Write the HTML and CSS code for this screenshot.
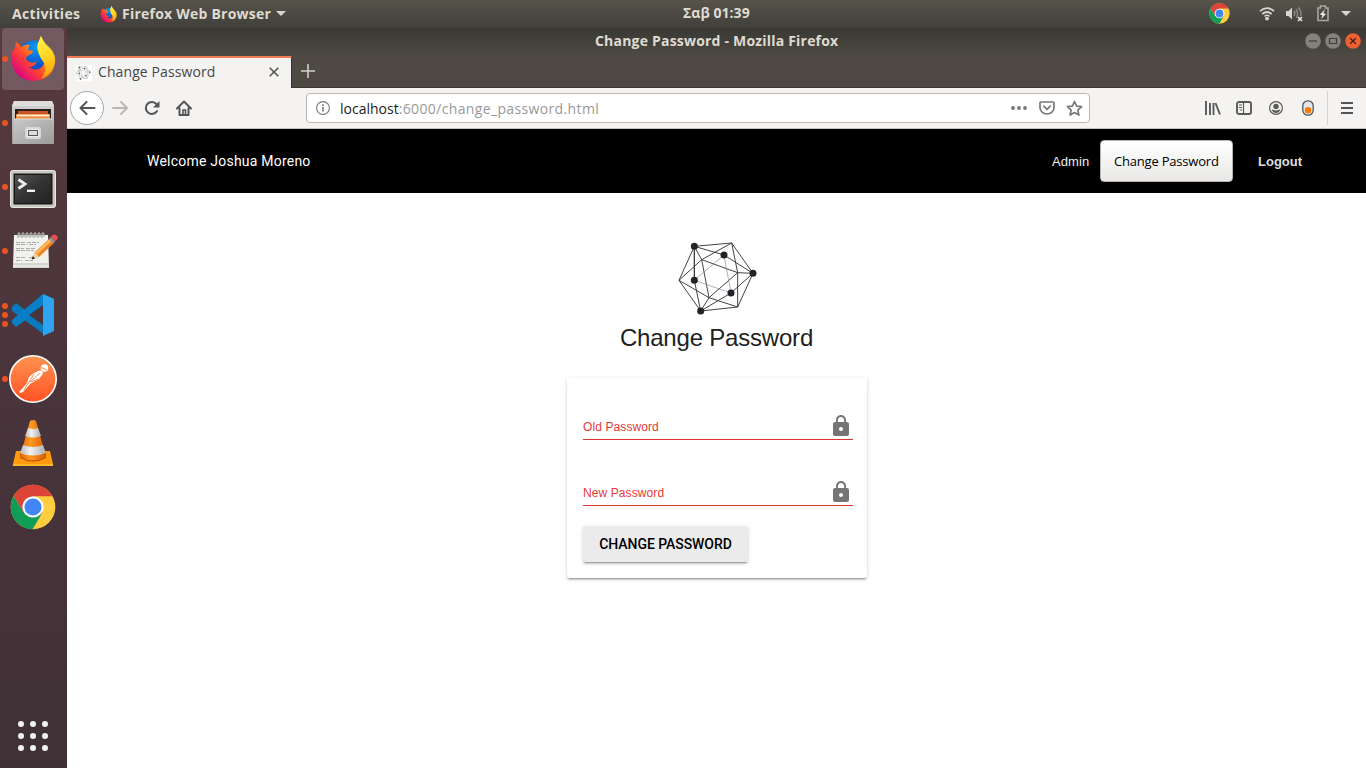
FILE: index.html
```html
<!DOCTYPE html>
<html lang="en">
<head>
<meta charset="utf-8">
<title>Change Password</title>
<link rel="stylesheet" href="styles.css">
</head>
<body>
<svg class="defs" width="0" height="0" aria-hidden="true">
  <defs>
    <linearGradient id="fox" x1=".9" y1=".1" x2=".15" y2=".85"><stop offset="0" stop-color="#ffe940"/><stop offset=".35" stop-color="#ffa115"/><stop offset=".65" stop-color="#ff4330"/><stop offset="1" stop-color="#dc087e"/></linearGradient>
    <linearGradient id="tail" x1=".4" y1="0" x2=".6" y2="1"><stop offset="0" stop-color="#fff04a"/><stop offset=".5" stop-color="#ffd51c"/><stop offset="1" stop-color="#ff9a12"/></linearGradient>
    <radialGradient id="globe" cx=".55" cy=".2" r=".9"><stop offset="0" stop-color="#0b9bf3"/><stop offset=".6" stop-color="#0a50ca"/><stop offset="1" stop-color="#252a8c"/></radialGradient>
    <linearGradient id="metal" x1="0" y1="0" x2="0" y2="1"><stop offset="0" stop-color="#d8d8d8"/><stop offset="1" stop-color="#989898"/></linearGradient>
    <linearGradient id="drawer" x1="0" y1="0" x2="1" y2="1"><stop offset="0" stop-color="#c9c9c9"/><stop offset="1" stop-color="#9c9c9c"/></linearGradient>
    <linearGradient id="screen" x1="0" y1="0" x2="1" y2="1"><stop offset="0" stop-color="#555"/><stop offset=".5" stop-color="#333"/><stop offset="1" stop-color="#222"/></linearGradient>
    <linearGradient id="post" x1="0" y1="0" x2="0" y2="1"><stop offset="0" stop-color="#ff9350"/><stop offset="1" stop-color="#ff5225"/></linearGradient>
    <linearGradient id="cone" x1="0" y1="0" x2="1" y2="0"><stop offset="0" stop-color="#e26500"/><stop offset=".4" stop-color="#ff9a24"/><stop offset="1" stop-color="#d65a00"/></linearGradient>
    <linearGradient id="band" x1="0" y1="0" x2="1" y2="0"><stop offset="0" stop-color="#b9b9b9"/><stop offset=".4" stop-color="#f2f2f2"/><stop offset="1" stop-color="#aaa"/></linearGradient>
    <symbol id="firefox" viewBox="0 0 46 46">
      <circle cx="24" cy="22" r="17.500" fill="url(#globe)"/>
      <path d="M6 6C8 7 10 9 11 11Q15 8 20 9Q18 11 18 14L23 15Q23 18 17 20Q14 24 20 26Q24 28 27 25Q25 31 19 31Q26 36 32 31Q37 25 32 15Q28 7 31 0Q34 7 40 12Q46 18 45 27Q42 44 23 45Q6 44 2 28Q0 16 5 12Z" fill="url(#fox)"/>
      <path d="M31 0Q33 7 39 12Q47 20 43 32Q39 40 31 43Q38 34 34 27Q25 14 28 7Z" fill="url(#tail)"/>
    </symbol>
    <symbol id="chrome" viewBox="0 0 46 46">
      <circle cx="23" cy="23" r="22.300" fill="#ffcd40"/>
      <path d="M3.700 11.900A22.300 22.300 0 0 1 42.500 12.300H23L13.300 28.500Z" fill="#db4437"/>
      <path d="M3.700 11.900A22.300 22.300 0 0 0 22.600 45.300L32.500 28.500L23 33L13.200 28Z" fill="#0f9d58"/>
      <circle cx="23" cy="23" r="10.600" fill="#fff"/><circle cx="23" cy="23" r="8.500" fill="#4285f4"/>
    </symbol>
    <symbol id="poly" viewBox="230 32 244 224">
      <g fill="none" stroke="#33353a" stroke-width="2.800">
        <path d="M282 48L394 38L458 129L412 230L301 242L236 150ZM304 88L412 127L326 202ZM282 48L304 88L236 150L326 202L301 242M304 88L394 38L412 127L458 129M412 127V230L326 202M282 48L371 74L458 129L392 188L301 242L282 150ZM282 48V150"/>
        <path d="M371 74L282 150L392 188Z" stroke="#888" stroke-width="2"/>
      </g>
      <g fill="#222329"><circle cx="282" cy="48" r="10.500"/><circle cx="371" cy="74" r="10.500"/><circle cx="458" cy="129" r="10.500"/><circle cx="282" cy="150" r="10.500"/><circle cx="392" cy="188" r="10.500"/><circle cx="301" cy="242" r="10.500"/></g>
    </symbol>
    <symbol id="lock" viewBox="0 0 24 24"><path fill="#757575" d="M18 8h-1V6c0-2.760-2.240-5-5-5S7 3.240 7 6v2H6c-1.100 0-2 .9-2 2v10c0 1.100.9 2 2 2h12c1.100 0 2-.9 2-2V10c0-1.100-.9-2-2-2zm-6 9c-1.100 0-2-.9-2-2s.9-2 2-2 2 .9 2 2-.9 2-2 2zm3.100-9H8.900V6c0-1.710 1.390-3.100 3.100-3.100 1.710 0 3.100 1.390 3.100 3.100v2z"/></symbol>
  </defs>
</svg>

<header class="panel">
  <div class="panel-left">
    <span class="activities">Activities</span>
    <svg class="panel-fox" width="17" height="17"><use href="#firefox"/></svg>
    <span class="app-name">Firefox Web Browser</span>
    <svg width="10" height="6" viewBox="0 0 10 6"><path d="M0 0h10L5 5z" fill="#d8d5ce"/></svg>
  </div>
  <span class="clock">Σαβ 01:39</span>
  <div class="panel-right">
    <svg class="tray-chrome" width="21" height="21"><use href="#chrome"/></svg>
    <svg class="tray-wifi" width="16" height="15" viewBox="0 0 16 15" fill="none" stroke="#d8d5ce" stroke-width="1.700"><path d="M1 5.200Q8-1 15 5.200"/><path d="M3.300 8Q8 4 12.700 8" /><path d="M5.500 10.300Q8 8.300 10.500 10.300" stroke-width="1.500"/><circle cx="8" cy="12.600" r="1.900" fill="#d8d5ce" stroke="none"/></svg>
    <svg class="tray-sound" width="18" height="16" viewBox="0 0 18 16" fill="none" stroke="#8f8c85" stroke-width="1.400"><path d="M0 5h2.500L6 1.500v12L2.500 10H0z" fill="#d8d5ce" stroke="none"/><path d="M8 5Q9.800 7.500 8 10M10 3Q13 7.500 10.300 11.500M12.500 1.500Q16 6 14.500 10"/><path d="M12 11l4 4M16 11l-4 4" stroke="#e5e2dc" stroke-width="1.700"/></svg>
    <svg class="tray-battery" width="12" height="17" viewBox="0 0 12 17"><path d="M1 3h2.500V1h5v2H11v12.500H1z" fill="none" stroke="#aaa79f" stroke-width="1.600"/><path d="M8.200 4L3 9.500l2.500.8L4 14l5-5-2.700-.8z" fill="#eee"/></svg>
    <svg width="10" height="6" viewBox="0 0 10 6"><path d="M0 0h10L5 5z" fill="#d8d5ce"/></svg>
  </div>
</header>

<div class="desktop">
<nav class="dock">
  <div class="dock-item active"><i class="dots"><b></b></i><svg width="46" height="46"><use href="#firefox"/></svg></div>
  <div class="dock-item"><i class="dots"><b></b></i>
    <svg width="44" height="46" viewBox="0 0 44 46"><path d="M3 1h38l2 5v38H1V6z" fill="url(#metal)"/><path d="M1 6L3 1h38l2 5z" fill="#dedede"/><path d="M4 9h36v11H4z" fill="#29201c"/><path d="M7 11h30v7H7z" fill="#c9562a"/><path d="M5 14h34v5H5z" fill="#f09040"/><path d="M6 15.500h32" stroke="#fff3df" stroke-width="1.500"/><path d="M3 19h38l1 25H2z" fill="url(#drawer)"/><path d="M3 19h38" stroke="#ddd"/><rect x="15" y="28" width="14" height="10" rx="1.500" fill="#eee" stroke="#d8d8d8" stroke-width="2"/><rect x="17.500" y="30.500" width="9" height="5" fill="#ddd" stroke="#555"/></svg></div>
  <div class="dock-item"><i class="dots"><b></b></i>
    <svg class="terminal" width="46" height="38" viewBox="0 0 46 38"><rect x=".5" y=".5" width="45" height="37" rx="2" fill="#c8c8c5" stroke="#e8e8e5"/><rect x="3.500" y="3.500" width="39" height="31" fill="#191919"/><rect x="5" y="5" width="36" height="28" fill="url(#screen)"/><path d="M8.500 9.500l6.500 4.500-6.500 4.500" fill="none" stroke="#eee" stroke-width="2.800"/><path d="M17 20.800h8" stroke="#fff" stroke-width="2.200"/></svg></div>
  <div class="dock-item"><i class="dots"><b></b></i>
    <svg class="editor" width="46" height="38" viewBox="0 0 46 38"><path d="M2 3h34l1 31H1z" fill="#f1f1ed"/><path d="M1 31h36v5H1z" fill="#d4d5d0"/><path d="M1 34h36" stroke="#fafafa"/><path d="M4 10.500h9m2 0h12M4 12.500h11m2 0h7M4 16.500h8m2 0h10M4 18.500h18M4 25.500h10m3 0h3M4 28.500h6m3 0h8" stroke="#aaa" stroke-dasharray="4 1"/><g fill="none" stroke="#a8a8a6" stroke-width="1.300"><path d="M6 6V2q1-2 2 0v3M10 6V2q1-2 2 0v3M14 6V2q1-2 2 0v3M18 6V2q1-2 2 0v3M22 6V2q1-2 2 0v3M26 6V2q1-2 2 0v3M30 6V2q1-2 2 0v3"/></g><path d="M20 27l3-7L37 7l5 4-15 14z" fill="#ee8420"/><path d="M23.500 20L37.500 7l2 2L25.500 22.500z" fill="#ffb55a"/><path d="M20 27l3-7 4 5z" fill="#efd5a0"/><path d="M19.500 27.500l1.300-3.500 2.200 2.400z" fill="#222"/><path d="M37 7l2-2 4 4.500-2 2z" fill="#8f979b"/><path d="M39 5q2.500-4 5.500-1.500t-1.500 6z" fill="#ea4f4f"/></svg></div>
  <div class="dock-item"><i class="dots"><b></b><b></b><b></b></i>
    <svg width="42" height="42" viewBox="0 0 42 42"><path d="M0 13l4-4L33 31v10L0 17z" fill="#0879bd"/><path d="M0 29l4 4L42 5 31 0 0 26z" fill="#087fc7"/><path d="M31 0l11 5v32l-11 5z" fill="#2da4ee"/><path d="M31 11v20L17 21z" fill="#49343a"/></svg></div>
  <div class="dock-item"><i class="dots"><b></b></i>
    <svg width="48" height="48" viewBox="0 0 48 48"><circle cx="24" cy="24" r="23.200" fill="url(#post)" stroke="#fff" stroke-width="1.600"/><circle cx="35.500" cy="13" r="3.800" fill="#fff"/><path d="M31 15.500q3 .5 3 3L30 24l-9 5-6 7-3 2-2-1 2-2 6-7 2-6q5-5 11-6.500z" fill="#fff"/><path d="M32 12.500l6 2.500M31 18l-10 9M25 19l-5 8-5 8M29 24l-7 3" fill="none" stroke="#ff7d48" stroke-width=".9"/></svg></div>
  <div class="dock-item"><i class="dots"></i>
    <svg width="42" height="46" viewBox="0 0 42 46"><path d="M4 31h34l3 13q0 2-2 2H2q-2 0-1-2z" fill="#ff9a0d"/><path d="M1 44h40v2H1z" fill="#ffb52b"/><path d="M8 33q13 10 26 0v5q-13 7-26 0z" fill="#b94c00"/><path d="M18 1q3-2 6 0l10 36q-13 7-26 0z" fill="url(#cone)"/><path d="M16 8q5 2 10 0l3 8q-8 3-16 0z" fill="url(#band)"/><path d="M11 25q10 4 20 0l3 8q-13 5-26 0z" fill="url(#band)"/></svg></div>
  <div class="dock-item"><i class="dots"></i><svg width="46" height="46"><use href="#chrome"/></svg></div>
  <svg class="apps" width="30" height="30" viewBox="0 0 30 30" fill="#f2f2f2"><circle cx="3" cy="3" r="3"/><circle cx="15" cy="3" r="3"/><circle cx="27" cy="3" r="3"/><circle cx="3" cy="15" r="3"/><circle cx="15" cy="15" r="3"/><circle cx="27" cy="15" r="3"/><circle cx="3" cy="27" r="3"/><circle cx="15" cy="27" r="3"/><circle cx="27" cy="27" r="3"/></svg>
</nav>

<main class="window">
  <div class="titlebar">
    <span class="win-title">Change Password - Mozilla Firefox</span>
    <div class="win-buttons">
      <svg width="16" height="16" viewBox="0 0 16 16"><circle cx="8" cy="8" r="7.800" fill="#84817a"/><path d="M4 8h8" stroke="#3c3b37" stroke-width="1.200"/></svg>
      <svg width="16" height="16" viewBox="0 0 16 16"><circle cx="8" cy="8" r="7.800" fill="#84817a"/><path d="M4.500 5.500h7v5h-7z" fill="none" stroke="#3c3b37" stroke-width="1.200"/></svg>
      <svg width="16" height="16" viewBox="0 0 16 16"><circle cx="8" cy="8" r="7.800" fill="#ee5f31"/><path d="M5.200 5.200l5.600 5.600M10.800 5.200l-5.600 5.600" stroke="#402018" stroke-width="1.300"/></svg>
    </div>
  </div>
  <div class="tabs">
    <div class="tab">
      <span class="favicon"><svg width="15" height="14"><use href="#poly"/></svg></span>
      <span class="tab-title">Change Password</span>
      <svg class="tab-close" width="10" height="10" viewBox="0 0 10 10"><path d="M.7.700l8.600 8.600M9.300.7L.7 9.300" stroke="#555" stroke-width="1.600"/></svg>
    </div>
    <svg class="new-tab" width="14" height="14" viewBox="0 0 14 14"><path d="M7 0v14M0 7h14" stroke="#d0cfcb" stroke-width="1.600"/></svg>
  </div>
  <div class="toolbar">
    <span class="back"><svg width="17" height="14" viewBox="0 0 17 14" fill="none" stroke="#555" stroke-width="2"><path d="M15.500 7H1.500M7.500 1l-6 6 6 6" stroke-linecap="round" stroke-linejoin="round"/></svg></span>
    <svg class="forward" width="17" height="14" viewBox="0 0 17 14" fill="none" stroke="#b9b8b7" stroke-width="2"><path d="M1 7h14M9 1l6 6-6 6" stroke-linecap="round" stroke-linejoin="round"/></svg>
    <svg class="reload" width="16" height="16" viewBox="0 0 16 16"><path d="M13 11A6 6 0 1 1 12.500 4.200" fill="none" stroke="#555" stroke-width="2" stroke-linecap="round"/><path d="M15.500 1v6.500H9z" fill="#555"/></svg>
    <svg class="home" width="16" height="16" viewBox="0 0 16 16" fill="none" stroke="#555" stroke-width="2"><path d="M1 8.500L8 1.500l7 7M3.500 8v7h9V8" stroke-linecap="round" stroke-linejoin="round"/><path d="M7 14v-4h2.500v4" stroke-width="1.600"/></svg>
    <div class="url-bar">
      <svg width="14" height="14" viewBox="0 0 14 14"><circle cx="7" cy="7" r="6.400" fill="none" stroke="#777" stroke-width="1.100"/><path d="M7 6v4.500M7 3.300v1.600" stroke="#777" stroke-width="1.600"/></svg>
      <span class="url"><span class="host">localhost</span><span class="path">:6000/change_password.html</span></span>
      <svg class="more" width="16" height="4" viewBox="0 0 16 4" fill="#777"><circle cx="2" cy="2" r="1.900"/><circle cx="8" cy="2" r="1.900"/><circle cx="14" cy="2" r="1.900"/></svg>
      <svg class="pocket" width="16" height="14" viewBox="0 0 16 14" fill="none" stroke="#777" stroke-width="1.700" stroke-linecap="round" stroke-linejoin="round"><path d="M2 1h12q1 0 1 1v4.500A7 6.500 0 0 1 1 6.500V2q0-1 1-1z"/><path d="M4.700 5.200L8 8.300l3.300-3.100"/></svg>
      <svg width="17" height="17" viewBox="0 0 17 17"><path d="M8.500 1.500l2.100 4.600 5 .6-3.700 3.400 1 5-4.400-2.500-4.400 2.500 1-5-3.700-3.400 5-.6z" fill="none" stroke="#777" stroke-width="1.700" stroke-linejoin="round"/></svg>
    </div>
    <div class="tools">
      <svg class="library" width="16" height="16" viewBox="0 0 16 16" stroke="#5a5a59" stroke-width="1.900"><path d="M1 1v14M5 3v12M8.500 3v12M10.500 3L15 14.500"/></svg>
      <svg class="sidebar" width="16" height="14" viewBox="0 0 16 14" fill="none" stroke="#5a5a59"><rect x="1" y="1" width="14" height="12" rx="2" stroke-width="1.900"/><path d="M7.500 1v12M3 4h3M3 6.500h3M4 9h2" stroke-width="1.200"/></svg>
      <svg class="account" width="14" height="14" viewBox="0 0 14 14"><circle cx="7" cy="7" r="6.400" fill="none" stroke="#5a5a59" stroke-width="1.200"/><circle cx="7" cy="5.400" r="2.700" fill="#5a5a59"/><path d="M2.600 8.300Q7 10.500 11.400 8.300Q10.500 12 7 12T2.600 8.300z" fill="#5a5a59"/></svg>
      <svg class="toggle" width="12" height="16" viewBox="0 0 12 16"><rect x=".8" y=".8" width="10.400" height="14.400" rx="5" fill="#e2e7ef" stroke="#555" stroke-width="1.300"/><circle cx="6" cy="10.300" r="3.200" fill="#ff7b00"/></svg>
      <span class="divider"></span>
      <svg width="12" height="12" viewBox="0 0 12 12"><path d="M0 1h12M0 6h12M0 11h12" stroke="#555" stroke-width="1.900"/></svg>
    </div>
  </div>

  <section class="page">
    <div class="navbar">
      <span class="welcome">Welcome Joshua Moreno</span>
      <div class="nav-links"><a class="admin">Admin</a><button class="nav-button"><span>Change Password</span></button><a class="logout">Logout</a></div>
    </div>
    <div class="content">
      <svg class="logo" width="81.330" height="74.670"><use href="#poly"/></svg>
      <h1 class="heading">Change Password</h1>
      <form class="card">
        <label class="field"><span>Old Password</span><svg width="24" height="24"><use href="#lock"/></svg></label>
        <label class="field"><span>New Password</span><svg width="24" height="24"><use href="#lock"/></svg></label>
        <button type="button" class="submit">CHANGE PASSWORD</button>
      </form>
    </div>
  </section>
</main>
</div>
</body>
</html>
```
FILE: styles.css
```css
* { box-sizing: border-box; }
body { margin: 0; width: 1366px; height: 768px; overflow: hidden; background: #fff; font-family: "Open Sans", "Noto Sans", sans-serif; }
svg { display: block; flex: none; }
.defs { position: absolute; }
span, a, button { white-space: nowrap; }

.panel { height: 28px; display: grid; grid-template-columns: 683px 68px 1fr; align-items: center; background: linear-gradient(#58544c, #403f3a); color: #dfdbd2; font-size: 14px; font-weight: 700; line-height: 26px; }
.panel-left { display: flex; align-items: center; padding-left: 12px; }
.activities { width: 88px; letter-spacing: .33px; }
.panel-fox { margin-right: 5px; }
.app-name { width: 154px; letter-spacing: .23px; }
.clock { padding-bottom: 2px; letter-spacing: .05px; }
.panel-right { display: flex; align-items: center; justify-content: flex-end; padding-right: 15px; }
.tray-chrome { margin: 0 29px 2px 0; }
.tray-wifi { margin: 0 11px 1px 0; }
.tray-sound { margin-right: 13px; }
.tray-battery { margin: 0 12px 2px 0; }

.desktop { display: grid; grid-template-columns: 67px 1299px; height: 740px; }
.dock { display: flex; flex-direction: column; gap: 2px; background: linear-gradient(#57393e, #49343b 50%, #3f3135); }
.dock-item { display: flex; align-items: center; width: 62px; height: 62px; margin-left: 2px; border-radius: 4px; }
.dock-item > svg { margin: 0 auto; }
.dock-item .terminal { margin-top: 3px; }
.dock-item .editor { margin-left: 10px; }
.active { background: #725a60; }
.dots { display: flex; flex-direction: column; gap: 3px; width: 6px; flex: none; margin-right: -6px; }
.dots b { width: 6px; height: 6px; border-radius: 50%; background: #e95420; }
.apps { margin: auto 0 17px 18px; }

.window { display: flex; flex-direction: column; }
.titlebar { display: grid; grid-template-columns: 528px 1fr auto; height: 28px; align-items: center; background: linear-gradient(#393833, #4e4a43); color: #dfdbd2; }
.win-title { grid-column: 2; padding-bottom: 2px; font-size: 14px; font-weight: 700; line-height: 26px; letter-spacing: .2px; }
.win-buttons { display: flex; gap: 4px; padding: 0 5px 2px 0; }
.tabs { display: flex; align-items: center; height: 32px; background: #4e4a43; border-bottom: 1px solid #3b3933; }
.tab { display: flex; align-items: center; width: 225px; height: 32px; padding-left: 9px; margin-bottom: -1px; background: #f4f3f2; border-top: 2px solid #f37c54; border-right: 1px solid #34332f; }
.favicon { width: 16px; height: 16px; margin-bottom: 1px; padding-top: 1px; background: #fff; }
.tab-title { width: 171px; margin-left: 6px; padding-bottom: 2px; font-size: 14px; line-height: 28px; color: #484746; letter-spacing: .1px; }
.tab-close { margin-bottom: 2px; }
.new-tab { margin: 0 0 2px 9px; }
.toolbar { display: flex; align-items: center; height: 41px; padding-left: 3px; background: #f4f3f2; border-bottom: 1px solid #c7c3c0; }
.back { display: grid; place-items: center; width: 34px; height: 34px; border: 1px solid #aaa8a6; border-radius: 50%; background: #fff; }
.forward { margin-left: 8px; }
.reload { margin-left: 15px; }
.home { margin-left: 16px; }
.url-bar { display: flex; align-items: center; width: 784px; height: 30px; margin-left: 114px; padding-left: 9px; border: 1px solid #bbb7b4; border-radius: 4px; background: #fff; }
.url { width: 671px; margin-left: 10px; padding-top: 2px; font-size: 14px; line-height: 26px; color: #999; }
.host { color: #222; }
.path { letter-spacing: .36px; }
.more { margin-right: 12px; }
.pocket { margin-right: 11px; }
.tools { display: flex; align-items: center; margin-left: 115px; }
.library { margin-right: 15px; }
.sidebar { margin-right: 17px; }
.account { margin-right: 19px; }
.toggle { margin-right: 13px; }
.divider { width: 1px; height: 34px; margin-right: 13px; background: #d5d3d1; }

.page { flex: 1; background: #fff; }
.navbar { display: flex; align-items: center; justify-content: space-between; height: 64px; padding: 0 63px 0 80px; background: #000; color: #fff; }
.welcome { font: 14px Roboto, sans-serif; letter-spacing: .22px; }
.nav-links { display: flex; align-items: center; font: 13px "Liberation Sans", Arial, sans-serif; }
.admin { width: 48px; color: #eee; letter-spacing: .1px; }
.nav-button { width: 133px; height: 42px; padding: 0 0 0 13px; border: 1px solid #b6b3b0; border-radius: 4px; background: linear-gradient(#fff, #e9e8e6); color: #000; text-align: left; font: 13px "Open Sans", "Noto Sans", sans-serif; letter-spacing: -.2px; }
.logout { width: 45px; margin-left: 25px; font-weight: 700; color: #ddd; }
.content { display: flex; flex-direction: column; align-items: center; padding-top: 48px; }
.logo { margin-left: 3px; }
.heading { margin: 8px 0 0; font: 400 24px/28px "Liberation Sans", Arial, sans-serif; color: #212121; letter-spacing: -.2px; }
.card { width: 300px; height: 200px; margin: 26px 0 0 1px; padding: 36px 14px 16px 16px; background: #fff; border-radius: 2px; box-shadow: 0 3px 1px -2px rgba(0,0,0,.2), 0 2px 2px rgba(0,0,0,.14), 0 1px 5px rgba(0,0,0,.12); font-family: "Liberation Sans", Arial, sans-serif; }
.field { display: flex; align-items: center; justify-content: space-between; height: 26px; margin-bottom: 40px; border-bottom: 1px solid #d8352c; font-size: 12px; color: #e53935; }
.field span { padding-top: 2px; letter-spacing: .1px; }
.field:nth-of-type(2) { margin-bottom: 20px; }
.submit { display: block; width: 165px; height: 36px; padding: 0; border: 0; border-radius: 2px; background: #ebebeb; box-shadow: 0 3px 1px -2px rgba(0,0,0,.2), 0 2px 2px rgba(0,0,0,.14), 0 1px 5px rgba(0,0,0,.12); color: #000; font: 500 14px Roboto, sans-serif; letter-spacing: -.06px; }
```
